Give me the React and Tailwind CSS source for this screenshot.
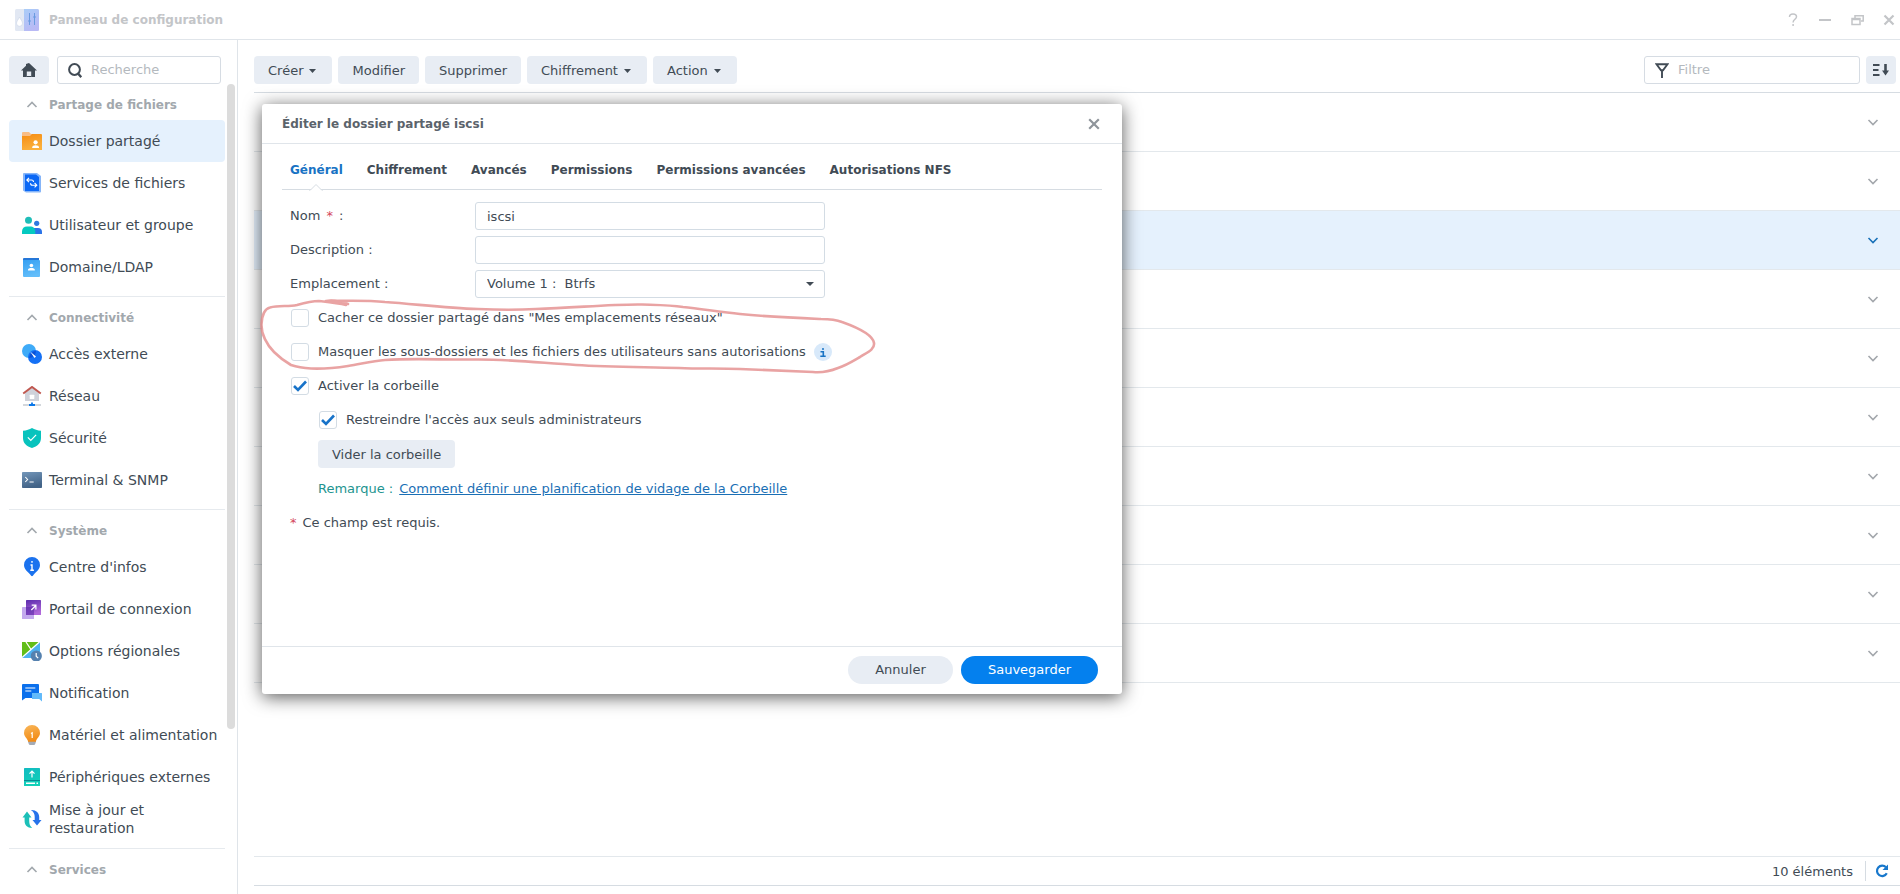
import { useState } from "react"

const sections = [
  {
    title: "Partage de fichiers",
    items: [
      { label: "Dossier partagé", icon: "folder" },
      { label: "Services de fichiers", icon: "services" },
      { label: "Utilisateur et groupe", icon: "users" },
      { label: "Domaine/LDAP", icon: "domain" },
    ],
  },
  {
    title: "Connectivité",
    items: [
      { label: "Accès externe", icon: "access" },
      { label: "Réseau", icon: "network" },
      { label: "Sécurité", icon: "security" },
      { label: "Terminal & SNMP", icon: "terminal" },
    ],
  },
  {
    title: "Système",
    items: [
      { label: "Centre d'infos", icon: "info" },
      { label: "Portail de connexion", icon: "portal" },
      { label: "Options régionales", icon: "region" },
      { label: "Notification", icon: "notification" },
      { label: "Matériel et alimentation", icon: "power" },
      { label: "Périphériques externes", icon: "devices" },
      { label: "Mise à jour et restauration", icon: "update" },
    ],
  },
  { title: "Services", items: [] },
]

const toolbar = [
  { label: "Créer", menu: true },
  { label: "Modifier" },
  { label: "Supprimer" },
  { label: "Chiffrement", menu: true },
  { label: "Action", menu: true },
]

const tabs = ["Général", "Chiffrement", "Avancés", "Permissions", "Permissions avancées", "Autorisations NFS"]

const iconShapes = {
  folder: (
    <>
      <path d="M0 2q0-1 1-1h6l2 2h2v4H0z" fill="#f8bd85" />
      <path d="M0 5h8l2-2h9q1 0 1 1v15H0z" fill="url(#g-orange)" />
      <circle cx="13.6" cy="11.3" r="2.1" fill="#fff" />
      <path d="M10.2 17v-.6c0-1.5 1.5-2.2 3.4-2.2s3.4.7 3.4 2.2v.6z" fill="#fff" />
    </>
  ),
  services: (
    <>
      <path d="M1 1q0-1 1-1h13l4 3v15.6q0 1-1 1H4l-3-2z" fill="#86b5f8" />
      <path d="M3 1.5h11l3 2.500V18H3z" fill="#0b68f5" />
      <path d="M11.500 9c0-1.200-.7-2-2-2H5M7 4.800 4.800 7 7 9.200M8.500 10.300c0 1.200.7 2 2 2h4M12.600 10l2.200 2.200-2.200 2.200" fill="none" stroke="#fff" strokeWidth="1.1" />
    </>
  ),
  users: (
    <>
      <circle cx="14.7" cy="8.3" r="2.6" fill="#2e78e0" />
      <path d="M9 13h7c2.6 0 4 1.700 4 3.700V19H9z" fill="#2b74e8" />
      <circle cx="6.5" cy="5.3" r="3.5" fill="#1fbdb8" />
      <path d="M0 16.5c0-3.200 2-5.100 5-5.100h3.200c3 0 5.100 1.900 5.100 5.100V19H0z" fill="#05c9c0" />
    </>
  ),
  domain: (
    <>
      <path d="M1 2q0-1 1-1h15v4H1z" fill="#2577d8" />
      <path d="M1 3h16q1 0 1 1v15q0 1-1 1H2q-1 0-1-1z" fill="url(#g-sky)" />
      <circle cx="9.4" cy="8.5" r="1.8" fill="#fff" />
      <path d="M6 13.5v-.7c0-1.300 1.500-1.900 3.400-1.900s3.400.6 3.400 1.900v.7z" fill="#fff" />
    </>
  ),
  access: (
    <>
      <circle cx="7" cy="7" r="7" fill="#3fabf8" />
      <circle cx="13" cy="13" r="7" fill="#1470f5" />
      <path d="M14 7.100A7 7 0 0 1 7.100 14 7 7 0 0 1 14 7.100z" fill="#0a51d6" />
      <path d="m8.300 7.800 4.200 6.200 1.500-1.400z" fill="#fff" />
    </>
  ),
  network: (
    <>
      <path d="M3 6.500 10 1l7 5.500V15H3z" fill="#cfd2da" />
      <path d="M1.200 7.500 10 .9l8.800 6.600" fill="none" stroke="#c05850" strokeWidth="1.9" />
      <rect x="7.7" y="8.7" width="4.600" height="4.400" rx=".6" fill="#fff" />
      <path d="M1 19h18" stroke="#ccd0d6" strokeWidth="1.7" />
      <path d="M7 19h6M10 16.500V19" stroke="#0b77e8" strokeWidth="1.8" />
    </>
  ),
  security: (
    <>
      <path d="M10 0c2.500 1.500 5.500 2.500 9 2.800V10c0 5-3.500 8.300-9 10-5.500-1.700-9-5-9-10V2.800C4.500 2.500 7.500 1.500 10 0z" fill="#08c3bd" />
      <path d="m5.800 9.300 3 3 5.300-5.500" fill="none" stroke="#fff" strokeWidth="1.200" />
    </>
  ),
  terminal: (
    <>
      <rect y="2" width="20" height="16" rx=".8" fill="url(#g-steel)" />
      <path d="m3.300 7 2.300 2.500L3.300 12M7.500 12h4.200" fill="none" stroke="#fff" strokeWidth="1.100" />
    </>
  ),
  info: (
    <>
      <path d="M10 0a8 8 0 0 1 8 8c0 4.500-4 6.800-6.200 9.600Q10 21 8.200 17.600C6 14.800 2 12.500 2 8a8 8 0 0 1 8-8z" fill="#1b72ee" />
      <path d="M10 4v1.700M8.500 8H10v5M8.300 13.300h3.600" fill="none" stroke="#fff" strokeWidth="1.400" />
    </>
  ),
  portal: (
    <>
      <rect y="8" width="12" height="12" rx=".6" fill="#c3a9ee" />
      <rect x="4" y="1" width="15" height="15" rx=".6" fill="url(#g-violet)" />
      <path d="M4 8h8v8H4z" fill="#592aa8" fillOpacity=".6" />
      <path d="m9.300 11 4.500-4.500M9.700 6.200h4.200v4.200" fill="none" stroke="#fff" strokeWidth="1.200" />
    </>
  ),
  region: (
    <>
      <rect y="1" width="18" height="16" fill="#4db2f2" />
      <path d="M0 1h17L0 16z" fill="#62bd19" />
      <path d="M0 16.500 17.500 1M4 1l5 7.500" stroke="#fff" strokeWidth="1.300" />
      <circle cx="14.300" cy="15" r="5.600" fill="#5581af" />
      <path d="M14.200 12v3.200l2 2" fill="none" stroke="#fff" strokeWidth="1.200" />
    </>
  ),
  notification: (
    <>
      <path d="M0 2q0-1 1-1h15q1 0 1 1v13H3.500L0 17.500z" fill="#0b70ec" />
      <path d="M3.300 5h10M3.300 8h6" stroke="#fff" strokeWidth="1.200" />
      <path d="M10 10h9.500q.5 0 .5.500V18.500L17.200 16H10z" fill="#62bafa" />
    </>
  ),
  power: (
    <>
      <path d="M10 0a8 8 0 0 1 8 8c0 3.600-3 5-4 8v1H6v-1c-1-3-4-4.400-4-8a8 8 0 0 1 8-8z" fill="url(#g-amber)" />
      <path d="M6 16.800h8l-.8 2.200q-.3 1-1.300 1H8.100q-1 0-1.300-1z" fill="#a5abb5" />
      <path d="m9 8.600 1.200-.8V13" fill="none" stroke="#fff" strokeWidth="1.200" />
    </>
  ),
  devices: (
    <>
      <rect x="2" y="1" width="16" height="18" rx=".6" fill="url(#g-teal)" />
      <path d="M2 13.500h16" stroke="#088b94" />
      <path d="M10 10.500v-6M7.500 6.700 10 4.200l2.500 2.500" fill="none" stroke="#fff" strokeWidth="1.200" />
      <path d="M4 16.300h9M14.500 16.300H16" stroke="#fff" strokeWidth="1.400" />
    </>
  ),
  update: (
    <>
      <path d="m5 2.500 4.500 6H7.200V12c0 3 .8 5 3 7-5-.2-7.600-2.800-7.600-7V8.500H.5z" fill="#1cc0b8" />
      <path d="M15 16.500 10.500 11h2.200V8c0-3-.8-5-3.800-7 5-.3 8.300 2.800 8.300 7v3h2.300z" fill="#2672ea" />
    </>
  ),
}

const gradients = [
  ["g-orange", "#f58c12", "#fbb03c"],
  ["g-sky", "#35a0f2", "#62bdfa"],
  ["g-steel", "#7396b9", "#426387"],
  ["g-violet", "#5a2bac", "#b068da"],
  ["g-amber", "#f9b75a", "#f28c17"],
  ["g-teal", "#12bac1", "#12d0b8"],
]

const MenuIcon = ({ name }) => (
  <svg viewBox="0 0 20 20" className="size-5 shrink-0" aria-hidden="true">
    {iconShapes[name]}
  </svg>
)

const Chevron = ({ className }) => (
  <svg viewBox="0 0 12 12" className={className} fill="none" stroke="currentColor" strokeWidth="1.6" aria-hidden="true">
    <path d="m1.500 4 4.500 4.500L10.500 4" />
  </svg>
)

const Caret = () => (
  <svg viewBox="0 0 7 4" className="mr-0.5 w-[7px] h-1" fill="currentColor" aria-hidden="true">
    <path d="M0 0h7L3.500 4z" />
  </svg>
)

const TitleBar = () => (
  <header className="h-10 shrink-0 flex items-center justify-between border-b border-[#e0e5ea] pl-[15px] pr-[5px] text-[#c3c5c8]">
    <div className="flex items-center gap-2.5">
      <svg viewBox="0 0 24 22" className="w-6 h-[22px]" aria-hidden="true">
        <rect width="24" height="22" rx="1.500" fill="#e2e8f3" />
        <path d="M9 0h13.500Q24 0 24 1.500v19q0 1.500-1.500 1.500H9z" fill="url(#g-app)" />
        <path d="M4.500 8c1 2.500 3 4.200 3 6.300a3 3 0 0 1-6 0C1.500 12.200 3.500 10.500 4.500 8z" fill="#fff" stroke="#c9d3e6" strokeWidth=".6" />
        <path d="M14.500 4v12M19.500 4v12M13 12h3M18 8h3" stroke="#6a9be0" />
      </svg>
      <h1 className="text-xs font-bold">Panneau de configuration</h1>
    </div>
    <div className="flex items-center gap-5">
      <button aria-label="Aide" className="w-3">
        <svg viewBox="0 0 12 14" className="w-3 h-3.5" fill="none" stroke="currentColor" strokeWidth="1.500">
          <path d="M2.500 4c0-2 1.500-3 3.500-3s3.500 1 3.500 2.800c0 2.400-3.400 2.700-3.400 5.700M6.100 11v2" />
        </svg>
      </button>
      <button aria-label="Réduire" className="w-3">
        <svg viewBox="0 0 12 12" className="size-3" stroke="currentColor" strokeWidth="2">
          <path d="M0 6h12" />
        </svg>
      </button>
      <button aria-label="Restaurer" className="w-3">
        <svg viewBox="0 0 13 12" className="w-[13px] h-3" fill="none" stroke="currentColor" strokeWidth="1.500">
          <path d="M1 4.500h8v6H1zM1 5.500h8M4 4V1.700h8.200V7H10" />
        </svg>
      </button>
      <button aria-label="Fermer" className="w-3">
        <svg viewBox="0 0 12 12" className="size-3" stroke="currentColor" strokeWidth="2.200">
          <path d="m1.500 1.500 9 9M10.500 1.500l-9 9" />
        </svg>
      </button>
    </div>
  </header>
)

const Sidebar = () => (
  <aside className="w-[238px] shrink-0 flex flex-col border-r border-[#dfe4e9] pl-[9px] pt-4">
    <div className="flex gap-2 pr-4">
      <button aria-label="Accueil" className="w-10 h-7 rounded-sm bg-[#e8edf4] flex items-center justify-center text-[#414b55]">
        <svg viewBox="0 0 16 14" className="w-4 h-3.5" fill="currentColor">
          <path d="M8 0l8 7.500h-2V14h-3.800V8.500H5.800V14H2V7.500H0L5 2.800V1z" />
          <path d="M5.800 13h4.400v1H5.800z" />
        </svg>
      </button>
      <label className="w-[164px] h-7 flex items-center gap-[9px] border border-[#d6dce3] rounded-[3px] pl-2.5 text-[#414b55]">
        <svg viewBox="0 0 14 15" className="w-3.5 h-[15px] shrink-0" fill="none" stroke="currentColor" strokeWidth="2">
          <circle cx="6.500" cy="6.500" r="5.400" />
          <path d="m10 10.500 3.300 3.700" strokeWidth="2.400" />
        </svg>
        <input type="search" aria-label="Recherche" placeholder="Recherche" className="w-full min-w-0 text-[13px] outline-none placeholder:text-[#b4b9be]" />
      </label>
    </div>
    <div className="flex-1 min-h-0 flex gap-0.5">
      <nav className="w-[216px] h-full overflow-hidden pt-1">
        {sections.map((section) => (
          <section key={section.title} className="pb-2 mb-1 border-b border-[#e6eaee] last:border-b-0">
            <h2 className="h-8 flex items-center gap-[11px] pl-[17px] pt-px text-xs font-bold text-[#a2a8ad]">
              <Chevron className="size-3 rotate-180" />
              {section.title}
            </h2>
            {section.items.map((item) => (
              <a
                key={item.label}
                href="#"
                className={`h-[42px] flex items-center gap-[7px] pl-[13px] rounded-sm text-sm leading-[18px] ${item.icon === "folder" ? "bg-[#e5f1fd]" : ""}`}>
                <MenuIcon name={item.icon} />
                <span className={item.icon === "update" ? "w-32" : "whitespace-nowrap"}>{item.label}</span>
              </a>
            ))}
          </section>
        ))}
      </nav>
      <div className="w-2 h-[645px] rounded-full bg-[#dcdcdc]" />
    </div>
  </aside>
)

const FolderList = () => (
  <main className="flex-1 min-w-0 flex flex-col pl-4 pt-4 pb-2">
    <div className="flex items-center justify-between pb-2 pr-1 border-b border-[#d6dce2]">
      <div className="flex gap-1.5">
        {toolbar.map((button) => (
          <button key={button.label} className="h-7 flex items-center gap-1.5 rounded-sm bg-[#e8edf4] px-3.5 pt-px text-[13px]">
            {button.label}
            {button.menu && <Caret />}
          </button>
        ))}
      </div>
      <div className="flex gap-1.5">
        <label className="w-[216px] h-7 flex items-center gap-[9px] border border-[#d6dce3] rounded-[3px] pl-2.5 text-[#414b55]">
          <svg viewBox="0 0 14 15" className="w-3.5 h-[15px] shrink-0" fill="none" stroke="currentColor" strokeWidth="1.900">
            <path d="M1.500 1.200h11L8 7.300H6L1.500 1.200zM7 7v8" />
          </svg>
          <input type="search" aria-label="Filtre" placeholder="Filtre" className="w-full min-w-0 text-[13px] outline-none placeholder:text-[#b4b9be]" />
        </label>
        <button aria-label="Trier" className="w-[30px] h-7 flex items-center justify-center rounded-sm bg-[#e8edf4] text-[#414b55]">
          <svg viewBox="0 0 16 12" className="w-4 h-3" fill="none" stroke="currentColor" strokeWidth="2">
            <path d="M0 1h6.500M0 6h5.500M0 11h6.500" />
            <path d="M12.500 0v8" strokeWidth="2.600" />
            <path d="M9 6.500h7L12.500 11.500z" fill="currentColor" stroke="none" />
          </svg>
        </button>
      </div>
    </div>
    <ul className="flex-1">
      {Array.from({ length: 10 }, (_, i) => (
        <li
          key={i}
          className={`h-[59px] flex items-center justify-end pr-[21px] border-b border-[#e3e8ec] ${i === 2 ? "bg-[#e5f1fd] text-[#1870b8]" : "text-[#a3a7ac]"}`}>
          <button aria-label="Afficher les détails">
            <Chevron className="size-3" />
          </button>
        </li>
      ))}
    </ul>
    <footer className="h-[30px] flex items-center justify-end border-y border-t-[#e3e8ec] border-b-[#d6dce2] pr-[11px] text-[13px]">
      <span className="pr-3 pt-px">10 éléments</span>
      <span className="h-5 border-l border-[#d6dce2] pr-[9px]" />
      <button aria-label="Actualiser" className="text-[#1878cc]">
        <svg viewBox="0 0 14 14" className="size-3.5" fill="none" stroke="currentColor" strokeWidth="2.200">
          <path d="M11.800 9.300A5.200 5.200 0 1 1 11 3.300" />
          <path d="M13 .5V6H7.500z" fill="currentColor" stroke="none" />
        </svg>
      </button>
    </footer>
  </main>
)

const Checkbox = ({ label, checked, onChange, children }) => (
  <div className="h-7 flex items-center pl-px">
    <label className="flex items-center gap-[9px]">
      <span className="grid place-items-center">
        <input
          type="checkbox"
          checked={checked}
          onChange={onChange}
          className="col-start-1 row-start-1 appearance-none size-[18px] rounded-[3px] border border-[#d3dce4] bg-white"
        />
        {checked && (
          <svg viewBox="0 0 14 12" className="col-start-1 row-start-1 w-3.5 h-3 pointer-events-none" fill="none" stroke="#1873c9" strokeWidth="2.600">
            <path d="m1 6 4 4 8-8.500" />
          </svg>
        )}
      </span>
      {label}
    </label>
    {children}
  </div>
)

const EditDialog = () => {
  const [name, setName] = useState("iscsi")
  const [description, setDescription] = useState("")
  const [options, setOptions] = useState({ hide: false, mask: false, recycle: true, restrict: true })

  const toggle = (key) => setOptions((prev) => ({ ...prev, [key]: !prev[key] }))

  return (
    <div
      role="dialog"
      aria-labelledby="dialog-title"
      className="absolute left-[262px] top-[104px] w-[860px] min-h-[590px] flex flex-col rounded-[3px] bg-white shadow-[0_3px_18px_rgba(0,0,0,0.65)]">
      <div className="h-10 flex items-center justify-between pl-5 pr-[22px] border-b border-[#e0e5ea]">
        <h2 id="dialog-title" className="text-xs font-bold text-[#5b636b]">
          Éditer le dossier partagé iscsi
        </h2>
        <button aria-label="Fermer" className="text-[#8f959b]">
          <svg viewBox="0 0 12 12" className="size-3" stroke="currentColor" strokeWidth="2.200">
            <path d="m1.200 1.200 9.600 9.600M10.800 1.200l-9.600 9.600" />
          </svg>
        </button>
      </div>

      <div role="tablist" className="mx-5 h-[46px] flex gap-6 px-2 pt-2 border-b border-[#d6dce2]">
        {tabs.map((tab, i) => (
          <button key={tab} role="tab" aria-selected={i === 0} className={`relative h-[38px] pb-0.5 text-xs font-bold ${i === 0 ? "text-[#1873c4]" : ""}`}>
            {tab}
            {i === 0 && (
              <svg viewBox="0 0 14 8" className="absolute left-1/2 -bottom-px -translate-x-1/2 w-3.5 h-2" aria-hidden="true">
                <path d="m1 7.500 6-6 6 6V8H1z" fill="#fff" />
                <path d="M.5 7.500H1l6-6 6 6h.5" fill="none" stroke="#d6dce2" />
              </svg>
            )}
          </button>
        ))}
      </div>

      <form id="folder-form" className="flex-1 flex flex-col gap-1.5 px-7 pt-3 text-[13px]">
        <div className="flex items-center">
          <label htmlFor="name" className="w-[185px]">
            Nom <span className="mx-0.5 text-[#d4475c]">*</span> :
          </label>
          <input id="name" value={name} onChange={(e) => setName(e.target.value)} className="w-[350px] h-7 rounded-[3px] border border-[#d3dce4] px-[11px]" />
        </div>
        <div className="flex items-center">
          <label htmlFor="description" className="w-[185px]">Description :</label>
          <input
            id="description"
            value={description}
            onChange={(e) => setDescription(e.target.value)}
            className="w-[350px] h-7 rounded-[3px] border border-[#d3dce4] px-[11px]"
          />
        </div>
        <div className="flex items-center">
          <label htmlFor="location" className="w-[185px]">Emplacement :</label>
          <div className="relative">
            <select id="location" className="appearance-none w-[350px] h-7 rounded-[3px] border border-[#d3dce4] px-[11px]">
              <option>{"Volume 1 : \u00a0Btrfs"}</option>
            </select>
            <svg viewBox="0 0 8 4" className="absolute right-[11px] top-3 w-2 h-1 pointer-events-none" fill="currentColor" aria-hidden="true">
              <path d="M0 0h8L4 4z" />
            </svg>
          </div>
        </div>

        <Checkbox label={'Cacher ce dossier partagé dans "Mes emplacements réseaux"'} checked={options.hide} onChange={() => toggle("hide")} />
        <Checkbox label="Masquer les sous-dossiers et les fichiers des utilisateurs sans autorisations" checked={options.mask} onChange={() => toggle("mask")}>
          <button type="button" aria-label="Information" className="ml-2 size-[18px] rounded-full bg-[#d8e9fa] flex items-center justify-center">
            <svg viewBox="0 0 6 9" className="w-1.5 h-[9px]" fill="none" stroke="#1873c4" strokeWidth="1.600">
              <path d="M2 1h2M.5 3.800H3.300V8.200M.3 8.200h5.400" />
            </svg>
          </button>
        </Checkbox>
        <Checkbox label="Activer la corbeille" checked={options.recycle} onChange={() => toggle("recycle")} />
        <div className="pl-7 flex flex-col items-start gap-1.5">
          <Checkbox label="Restreindre l'accès aux seuls administrateurs" checked={options.restrict} onChange={() => toggle("restrict")} />
          <button type="button" className="h-7 px-3.5 pt-px rounded-sm bg-[#e8edf4]">Vider la corbeille</button>
          <p className="h-7 flex items-center gap-1.5 pt-px text-[#229490]">
            Remarque :
            <a href="#" className="text-[#1a6fb5] underline">Comment définir une planification de vidage de la Corbeille</a>
          </p>
        </div>
        <p className="h-7 flex items-center gap-1.5 pt-px">
          <span className="text-[#d4475c]">*</span> Ce champ est requis.
        </p>
      </form>

      <div className="h-12 flex items-center justify-end gap-2 pr-6 pb-px border-t border-[#e0e5ea] text-[13px]">
        <button className="h-7 w-[105px] rounded-full bg-[#e8edf4]">Annuler</button>
        <button form="folder-form" type="button" className="h-7 w-[137px] rounded-full bg-[#0480ee] text-white">Sauvegarder</button>
      </div>

      {/* Red pen loop around the two visibility options */}
      <svg
        viewBox="258 296 622 82"
        className="absolute -left-1 top-48 w-[622px] h-[82px] pointer-events-none"
        fill="none"
        stroke="#e48c8c"
        strokeOpacity="0.8"
        strokeWidth="2.6"
        strokeLinecap="round"
        strokeLinejoin="round"
        aria-hidden="true">
        <path d="M348 304C340 301 333 300 326 301C345 301 365 300 385 302C415 304 445 308 478 309C500 310 518 310 536 309C575 308 610 304 642 304.500C657 305 670 305 683 307C702 309 720 312 740 314C768 317 795 318 821 319C830 319 837 320 842 322C856 327 873 335 874 343C875 350 866 353 860 357C853 361 847 365 838 368C828 372 822 373 813 372C788 371 764 370 740 369C720 368 700 369 679 368C645 367 610 367 576 365C542 363 508 359 474 359.500C444 360 414 358 385 360C372 361 361 364 348 366C335 368 323 369 311 368.500C303 368 297 367 291 365C284 361 279 357 274 352C267 345 261 334 261.500 324C262 315 264 309 270 307.500C279 305 288 307 297 305C304 303 311 301 319 301C328 302 338 303 346 305" />
      </svg>
    </div>
  )
}

const App = () => (
  <div className="relative h-screen min-w-[1140px] overflow-hidden flex flex-col bg-white font-['DejaVu_Sans',Verdana,sans-serif] text-[#414b55]">
    <svg className="absolute size-0" aria-hidden="true">
      <defs>
        {gradients.map(([id, from, to]) => (
          <linearGradient key={id} id={id} x1="0" y1="0" x2="0.3" y2="1">
            <stop offset="0" stopColor={from} />
            <stop offset="1" stopColor={to} />
          </linearGradient>
        ))}
        <linearGradient id="g-app" x1="0" y1="0" x2="0.5" y2="1">
          <stop offset="0" stopColor="#a9cdf8" />
          <stop offset="1" stopColor="#b9b9f5" />
        </linearGradient>
      </defs>
    </svg>
    <TitleBar />
    <div className="flex-1 min-h-0 flex">
      <Sidebar />
      <FolderList />
    </div>
    <EditDialog />
  </div>
)

export default App
